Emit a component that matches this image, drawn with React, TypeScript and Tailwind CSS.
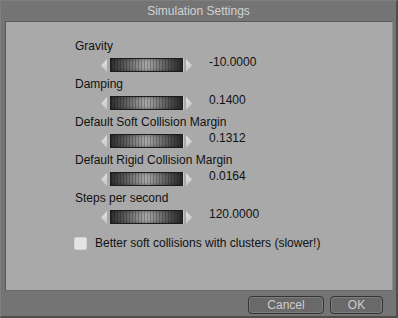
import React from "react";

function Arrow({ dir }: { dir: "left" | "right" }) {
  return (
    <svg width="6" height="13" viewBox="0 0 6 13" className="block">
      <defs>
        <linearGradient id={`ag-${dir}`} x1="0" y1="0" x2="0" y2="1">
          <stop offset="0" stopColor="#e2e2e2" />
          <stop offset="1" stopColor="#c4c4c4" />
        </linearGradient>
      </defs>
      {dir === "left" ? (
        <polygon points="6,0 6,13 0,6.5" fill={`url(#ag-${dir})`} />
      ) : (
        <polygon points="0,0 0,13 6,6.5" fill={`url(#ag-${dir})`} />
      )}
    </svg>
  );
}

function Row({ label, value }: { label: string; value: string }) {
  return (
    <div className="flex flex-col">
      <div className="h-[14px] leading-[14px] text-[12px] text-[#111]">{label}</div>
      <div className="mt-[5px] mb-[5px] flex items-start">
        <div className="ml-[26px] flex items-center gap-[3px]">
          <Arrow dir="left" />
          <div className="relative h-[14px] w-[73px] border border-[#1c1c1c] bg-[image:linear-gradient(to_bottom,rgba(0,0,0,0.18)_0%,rgba(0,0,0,0)_25%,rgba(0,0,0,0)_75%,rgba(0,0,0,0.18)_100%),repeating-linear-gradient(to_right,rgba(0,0,0,0.22)_0px,rgba(0,0,0,0.22)_1px,rgba(0,0,0,0)_1px,rgba(0,0,0,0)_3px),linear-gradient(to_right,#2e2e2e_0%,#565656_18%,#8a8a8a_38%,#a8a8a8_50%,#828282_64%,#4c4c4c_84%,#2a2a2a_100%)] shadow-[1px_0_0_#c8c8c8]" />
          <Arrow dir="right" />
        </div>
        <div className="ml-[17px] -mt-[3px] h-[14px] leading-[14px] text-[12px] text-[#111]">{value}</div>
      </div>
    </div>
  );
}

export default function App() {
  const rows = [
    { label: "Gravity", value: "-10.0000" },
    { label: "Damping", value: "0.1400" },
    { label: "Default Soft Collision Margin", value: "0.1312" },
    { label: "Default Rigid Collision Margin", value: "0.0164" },
    { label: "Steps per second", value: "120.0000" },
  ];
  return (
    <div
      className="w-[398px] h-[318px] bg-[#747474] border-t border-l border-[#7e7e7e] border-r-2 border-b-2 border-r-[#4e4e4e] border-b-[#4e4e4e] flex flex-col"
      style={{ fontFamily: '"Liberation Sans", Arial, sans-serif' }}
    >
      <div className="h-[20px] pt-[3px] text-center text-[12px] leading-[14px] text-[#d2d2d2]">
        Simulation Settings
      </div>
      <div className="ml-[4px] mr-[3px] h-[270px] bg-[#a9a9a9] border border-[#5a5a5a] border-r-[#8c8c8c] border-b-[#6a6a6a] pl-[69px] pt-[17px] flex flex-col">
        {rows.map((r) => (
          <Row key={r.label} label={r.label} value={r.value} />
        ))}
        <div className="mt-[7px] -ml-[1px] flex items-center gap-[8px]">
          <div className="h-[13px] w-[13px] rounded-[2px] bg-[#e4e4e4] border border-[#d4d4d4]" />
          <div className="h-[14px] leading-[14px] text-[12px] text-[#111]">
            Better soft collisions with clusters (slower!)
          </div>
        </div>
      </div>
      <div className="flex justify-end gap-[6px] pr-[13px] pt-[5px]">
        <button className="h-[18px] w-[76px] rounded-[4px] bg-[#696969] border border-[#333] shadow-[inset_0_0_0_1px_#7e7e7e] text-[12px] leading-[14px] text-[#cdcdcd]">
          Cancel
        </button>
        <button className="h-[18px] w-[53px] rounded-[4px] bg-[#696969] border border-[#333] shadow-[inset_0_0_0_1px_#7e7e7e] text-[12px] leading-[14px] text-[#cdcdcd]">
          OK
        </button>
      </div>
    </div>
  );
}
